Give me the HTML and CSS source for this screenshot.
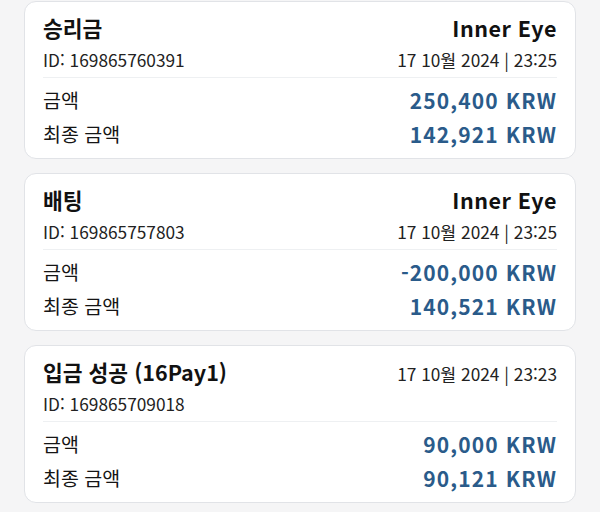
FILE: index.html
```html
<!DOCTYPE html>
<html lang="ko">
<head>
    <meta charset="UTF-8">
    <meta name="viewport" content="width=device-width, initial-scale=1.0">
    <title>거래 내역</title>
    <link rel="stylesheet" href="styles.css">
</head>
<body>
    <div class="history">
        <!--승리금-->
        <div class="card">
            <div class="card-head">
                <div class="line">
                    <div class="title">승리금</div>
                    <div class="provider">Inner Eye</div>
                </div>
                <div class="line">
                    <div class="meta">ID: 169865760391</div>
                    <div class="meta">17 10월 2024 | 23:25</div>
                </div>
            </div>
            <div class="card-body">
                <div class="row"><span>금액</span><span class="sum">250,400 KRW</span></div>
                <div class="row"><span>최종 금액</span><span class="sum">142,921 KRW</span></div>
            </div>
        </div>

        <!--배팅-->
        <div class="card">
            <div class="card-head">
                <div class="line">
                    <div class="title">배팅</div>
                    <div class="provider">Inner Eye</div>
                </div>
                <div class="line">
                    <div class="meta">ID: 169865757803</div>
                    <div class="meta">17 10월 2024 | 23:25</div>
                </div>
            </div>
            <div class="card-body">
                <div class="row"><span>금액</span><span class="sum">-200,000 KRW</span></div>
                <div class="row"><span>최종 금액</span><span class="sum">140,521 KRW</span></div>
            </div>
        </div>

        <!--입금-->
        <div class="card">
            <div class="card-head">
                <div class="line">
                    <div class="title">입금 성공 (16Pay1)</div>
                    <div class="meta">17 10월 2024 | 23:23</div>
                </div>
                <div class="line">
                    <div class="meta">ID: 169865709018</div>
                </div>
            </div>
            <div class="card-body">
                <div class="row"><span>금액</span><span class="sum">90,000 KRW</span></div>
                <div class="row"><span>최종 금액</span><span class="sum">90,121 KRW</span></div>
            </div>
        </div>
    </div>
</body>
</html>
```

FILE: styles.css
```css
/*Страница*/
body {
    margin: 0;
    padding: 1px 24px 0;
    background-color: #f5f5f6;
    font-family: "Noto Sans CJK KR", "Noto Sans", sans-serif;
    color: #151515;
}

/*Список карточек*/
.history {
    display: flex;
    flex-direction: column;
    gap: 14px;
}

/*Карточка операции*/
.card {
    background-color: #fff;
    border: 1px solid #e1e3e7;
    border-radius: 12px;
    padding: 11px 18px 9px;
}

/*Шапка карточки*/
.card-head {
    padding-bottom: 3px;
    border-bottom: 1px solid #eef0f2;
}

.line {
    display: flex;
    justify-content: space-between;
    align-items: baseline;
    height: 30px;
    line-height: 30px;
}

.line + .line {
    margin-top: 3px;
    height: 28px;
    line-height: 28px;
}

.title {
    font-size: 21.5px;
    font-weight: 700;
    color: #111;
}

.provider {
    font-size: 21.5px;
    font-weight: 700;
    letter-spacing: 0.5px;
    color: #111;
}

.meta {
    font-size: 17.3px;
    color: #222;
}

/*Суммы*/
.card-body {
    padding-top: 7px;
}

.row {
    display: flex;
    justify-content: space-between;
    align-items: center;
    height: 30px;
    font-size: 19.5px;
    line-height: 30px;
}

.row + .row {
    margin-top: 4px;
}

.sum {
    font-size: 21px;
    font-weight: 700;
    letter-spacing: 1.1px;
    color: #2a5b8a;
}
```
